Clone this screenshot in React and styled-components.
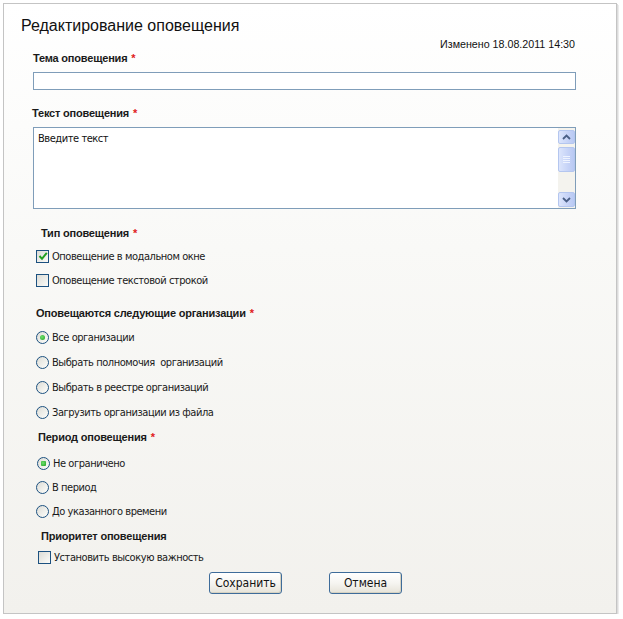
import React from 'react';
import styled, { createGlobalStyle } from 'styled-components';

const GlobalStyle = createGlobalStyle`
    html, body {
        margin: 0;
        padding: 0;
        background: #ffffff;
    }
    body {
        font-family: "DejaVu Sans Condensed", "DejaVu Sans", sans-serif;
        font-size: 11px;
        color: #1a1a1a;
    }
`;

const Panel = styled.div`
    margin: 3px 0 0 3px;
    width: 612px;
    height: 609px;
    border: 1px solid #c4c4c4;
    box-shadow: 1px 1px 0 #dcdcdc, 2px 2px 0 #ececec;
    background: linear-gradient(to bottom, #ffffff 0%, #f9f9f7 40%, #f2f1ed 100%);
    display: flex;
    flex-direction: column;
    box-sizing: content-box;
`;

const Title = styled.h1`
    margin: 10px 0 0 17px;
    height: 24px;
    line-height: 24px;
    font-family: "Liberation Sans", Arial, sans-serif;
    font-weight: normal;
    font-size: 16px;
    color: #111;
`;

const Modified = styled.div`
    height: 13px;
    line-height: 13px;
    padding-right: 41px;
    text-align: right;
    font-family: "Liberation Sans", Arial, sans-serif;
    font-size: 10.7px;
    color: #111;
`;

const Heading = styled.div`
    height: 14px;
    line-height: 14px;
    margin-top: ${p => p.$top || 0}px;
    padding-left: ${p => p.$indent || 29}px;
    font-family: "Liberation Sans", Arial, sans-serif;
    font-weight: bold;
    font-size: 11px;
    letter-spacing: -0.2px;
    color: #1a1a1a;
`;

const Star = styled.span`
    color: #e02020;
    margin-left: 4px;
`;

const TextInput = styled.input`
    display: block;
    margin: 7px 0 0 29px;
    width: 543px;
    height: 18px;
    box-sizing: border-box;
    border: 1px solid #7f9db9;
    background: #fff;
    padding: 0 4px;
    outline: none;
`;

const AreaBox = styled.div`
    display: flex;
    margin: 7px 0 0 29px;
    width: 543px;
    height: 82px;
    box-sizing: border-box;
    border: 1px solid #7f9db9;
    background: #fff;
`;

const AreaText = styled.div`
    flex: 1;
    padding: 4px 4px;
    font-size: 11px;
    letter-spacing: -0.45px;
    line-height: 14px;
    color: #111;
`;

const Scrollbar = styled.div`
    width: 17px;
    display: flex;
    flex-direction: column;
    background: #f4f3ee;
    padding: 2px 0 0 0;
    gap: 3px;
`;

const ScrollButton = styled.div`
    height: ${p => p.$h}px;
    margin: ${p => p.$m || '0'};
    border: 1px solid #b4c6ef;
    border-radius: 2px;
    background: linear-gradient(to right, #dce5fc 0%, #c6d3f7 60%, #b9c9f3 100%);
    display: flex;
    align-items: center;
    justify-content: center;
`;

const Track = styled.div`
    flex: 1;
`;

const Row = styled.label`
    display: flex;
    align-items: center;
    height: ${p => p.$h || 24}px;
    margin-top: ${p => p.$top || 0}px;
    padding-left: ${p => p.$indent || 32}px;
    gap: 3px;
    font-size: 11px;
    letter-spacing: -0.45px;
    white-space: pre;
    color: #1a1a1a;
`;

const Box = styled.span`
    width: 11px;
    height: 11px;
    border: 1px solid #1c5180;
    background: linear-gradient(135deg, #dcdcd6 0%, #f2f2ee 70%, #fbfbf9 100%);
    display: flex;
    align-items: center;
    justify-content: center;
    flex-shrink: 0;
`;

const Radio = styled.span`
    width: 11px;
    height: 11px;
    border: 1px solid #1c5180;
    border-radius: 50%;
    background: linear-gradient(135deg, #dcdcd6 0%, #f4f4f0 70%, #fdfdfb 100%);
    display: flex;
    align-items: center;
    justify-content: center;
    flex-shrink: 0;
`;

const Dot = styled.span`
    width: 5px;
    height: 5px;
    border-radius: ${p => (p.$square ? '1px' : '50%')};
    background: radial-gradient(circle at 40% 40%, #6ee06e 0%, #21a121 100%);
`;

const Buttons = styled.div`
    display: flex;
    gap: 47px;
    margin-top: 3px;
    padding-left: 205px;
`;

const Button = styled.button`
    width: 73px;
    height: 22px;
    padding: 0;
    border: 1px solid #3e6c9a;
    border-radius: 3px;
    background: linear-gradient(to bottom, #ffffff 0%, #f6f5f1 50%, #e6e3d8 100%);
    box-shadow: inset -1px -1px 0 #d6d2c2;
    font-family: "DejaVu Sans Condensed", "DejaVu Sans", sans-serif;
    font-size: 12px;
    color: #111;
`;

const Check = () => (
    <svg width="10" height="10" viewBox="0 0 10 10">
        <path d="M1.5 5 L4 7.8 L8.8 1.8" fill="none" stroke="#22a022" strokeWidth="2" />
    </svg>
);

const Chevron = ({ up }) => (
    <svg width="9" height="6" viewBox="0 0 9 6">
        <path d={up ? 'M1 5 L4.5 1.5 L8 5' : 'M1 1 L4.5 4.5 L8 1'} fill="none" stroke="#4a5f86" strokeWidth="1.8" />
    </svg>
);

const Grip = () => (
    <svg width="7" height="7" viewBox="0 0 7 7">
        <path d="M0 0.5 H7 M0 2.5 H7 M0 4.5 H7 M0 6.5 H7" stroke="#eef3ff" strokeWidth="1" />
    </svg>
);

const organizations = [
    'Все организации',
    'Выбрать полномочия  организаций',
    'Выбрать в реестре организаций',
    'Загрузить организации из файла',
];

const periods = ['Не ограничено', 'В период', 'До указанного времени'];

const App = () => {
    return (
        <>
            <GlobalStyle />
            <Panel>
                <Title>Редактирование оповещения</Title>
                <Modified>Изменено 18.08.2011 14:30</Modified>

                <Heading>Тема оповещения<Star>*</Star></Heading>
                <TextInput />

                <Heading $top={16} $indent={28}>Текст оповещения<Star>*</Star></Heading>
                <AreaBox>
                    <AreaText>Введите текст</AreaText>
                    <Scrollbar>
                        <ScrollButton $h={12}><Chevron up /></ScrollButton>
                        <ScrollButton $h={23}><Grip /></ScrollButton>
                        <Track />
                        <ScrollButton $h={13} $m="0 0 1px 0"><Chevron /></ScrollButton>
                    </Scrollbar>
                </AreaBox>

                <Heading $top={17} $indent={37}>Тип оповещения<Star>*</Star></Heading>
                <Row $top={4}>
                    <Box><Check /></Box>
                    Оповещение в модальном окне
                </Row>
                <Row>
                    <Box />
                    Оповещение текстовой строкой
                </Row>

                <Heading $top={14} $indent={32}>Оповещаются следующие организации<Star>*</Star></Heading>
                {organizations.map((name, i) => (
                    <Row key={name} $h={25} $top={i === 0 ? 5 : 0}>
                        <Radio>{i === 0 && <Dot />}</Radio>
                        {name}
                    </Row>
                ))}

                <Heading $top={5} $indent={34}>Период оповещения<Star>*</Star></Heading>
                {periods.map((name, i) => (
                    <Row key={name} $top={i === 0 ? 7 : 0} $indent={i === 0 ? 33 : 32}>
                        <Radio>{i === 0 && <Dot $square />}</Radio>
                        {name}
                    </Row>
                ))}

                <Heading $top={6} $indent={37}>Приоритет оповещения</Heading>
                <Row $top={2} $indent={34}>
                    <Box />
                    Установить высокую важность
                </Row>

                <Buttons>
                    <Button>Сохранить</Button>
                    <Button>Отмена</Button>
                </Buttons>
            </Panel>
        </>
    );
};

export default App;
